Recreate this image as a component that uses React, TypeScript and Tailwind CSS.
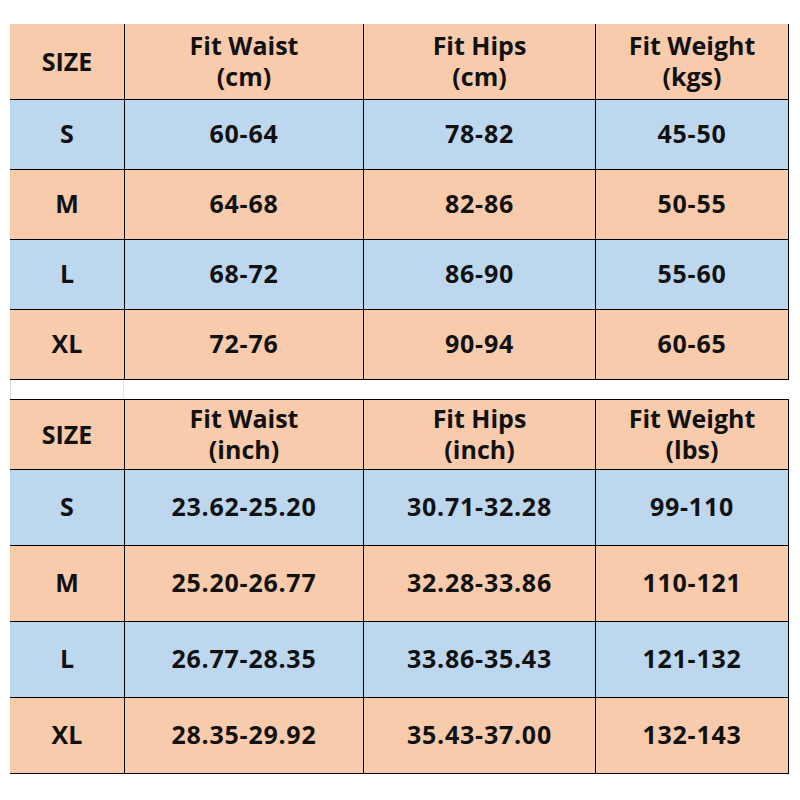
import React from "react";

const ORANGE = "bg-[#f8cbad]";
const BLUE = "bg-[#bdd7ee]";

type TableProps = {
  header: [string, string, string];
  rows: [string, string, string, string][];
  rowsClass: string;
  extraTop?: boolean;
};

function Table({ header, rows, rowsClass, extraTop }: TableProps) {
  return (
    <div
      className={`grid grid-cols-[114px_238px_231px_192px] ${rowsClass} gap-px bg-black border-r border-b border-black w-[779px] ${
        extraTop ? "border-t" : ""
      }`}
    >
      <div className={`${ORANGE} flex items-center justify-center`}>SIZE</div>
      {header.map((h, i) => {
        const [a, b] = h.split("|");
        return (
          <div key={i} className={`${ORANGE} flex flex-col items-center justify-center leading-[31px] pb-[2px]`}>
            <span>{a}</span>
            <span>{b}</span>
          </div>
        );
      })}
      {rows.map((r, ri) =>
        r.map((c, ci) => (
          <div
            key={`${ri}-${ci}`}
            className={`${ri % 2 === 0 ? BLUE : ORANGE} flex items-center justify-center ${
              ci > 0 ? "tracking-[0.03em]" : ""
            } pb-[1px]`}
          >
            {c}
          </div>
        ))
      )}
    </div>
  );
}

export default function App() {
  return (
    <div
      className="w-[800px] h-[800px] bg-white pl-[10px] pt-[24px] text-[25px] font-bold text-[#111]"
      style={{ fontFamily: "'Open Sans', 'Noto Sans', sans-serif" }}
    >
      <Table
        header={["Fit Waist|(cm)", "Fit Hips|(cm)", "Fit Weight|(kgs)"]}
        rows={[
          ["S", "60-64", "78-82", "45-50"],
          ["M", "64-68", "82-86", "50-55"],
          ["L", "68-72", "86-90", "55-60"],
          ["XL", "72-76", "90-94", "60-65"],
        ]}
        rowsClass="grid-rows-[75px_69px_69px_69px_69px]"
      />
      <div className="h-[19px] w-[779px] flex border-l border-[#e0e0e0]">
        <div className="w-[113px] border-r border-[#e6e6e6]" />
      </div>
      <Table
        extraTop
        header={["Fit Waist|(inch)", "Fit Hips|(inch)", "Fit Weight|(lbs)"]}
        rows={[
          ["S", "23.62-25.20", "30.71-32.28", "99-110"],
          ["M", "25.20-26.77", "32.28-33.86", "110-121"],
          ["L", "26.77-28.35", "33.86-35.43", "121-132"],
          ["XL", "28.35-29.92", "35.43-37.00", "132-143"],
        ]}
        rowsClass="grid-rows-[69px_75px_75px_75px_75px]"
      />
    </div>
  );
}
